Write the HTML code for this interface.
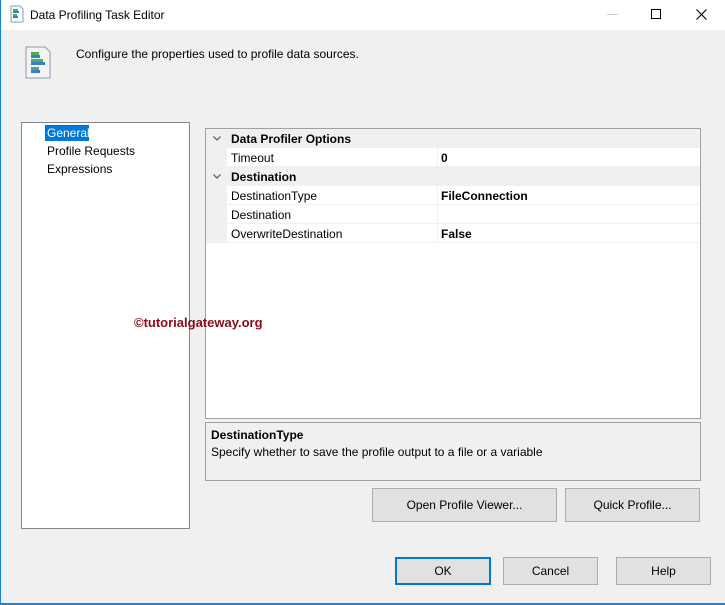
<!DOCTYPE html>
<html><head><style>
*{box-sizing:border-box;margin:0;padding:0}
body{width:725px;height:605px;background:#f0f0f0;font-family:"Liberation Sans",sans-serif;font-size:12px;color:#000;position:relative;overflow:hidden}
.abs{position:absolute}
.btn{position:absolute;background:#e1e1e1;border:1px solid #adadad;text-align:center;font-size:12px}
.row{position:absolute;left:0;width:494px;height:19px;line-height:20px}
.cat{background:#f0f0f0;font-weight:bold}
.cell{position:absolute;top:0;height:18px;background:#fff}
.chev{position:absolute;left:7px;top:7px}
</style></head><body>
<div class="abs" style="left:0;top:0;width:725px;height:30px;background:#fff"></div>
<div class="abs" style="left:0;top:0;width:1px;height:605px;background:#1883d7"></div>
<div class="abs" style="left:0;top:603px;width:725px;height:2px;background:#1883d7"></div>
<svg class="abs" style="left:10px;top:5px" width="14" height="18"><path d="M1 1h9l3 3v13H1z" fill="#fff" stroke="#8a9ab0"/><rect x="3" y="4" width="5" height="2" fill="#4caf50"/><rect x="3" y="6" width="6" height="2" fill="#3a7bd5"/><rect x="3" y="9" width="4" height="2" fill="#4caf50"/><rect x="3" y="11" width="5" height="2" fill="#3a7bd5"/></svg>
<div class="abs" style="left:30px;top:8px;font-size:12px">Data Profiling Task Editor</div>
<div class="abs" style="left:607px;top:14px;width:11px;height:1px;background:#ccc"></div>
<div class="abs" style="left:651px;top:9px;width:10px;height:10px;border:1px solid #000"></div>
<svg class="abs" style="left:696px;top:9px" width="11" height="11"><path d="M0.5 0.5L10.5 10.5M10.5 0.5L0.5 10.5" stroke="#000" stroke-width="1.1"/></svg>
<svg class="abs" style="left:25px;top:46px" width="26" height="33"><path d="M1 1h19l5 5v26H1z" fill="#f4f4f4" stroke="#8a9ab0"/><rect x="6" y="6" width="8" height="3" fill="#4caf50"/><rect x="6" y="9" width="9" height="3" fill="#3a7bd5"/><rect x="6" y="13" width="12" height="3" fill="#4caf50"/><rect x="6" y="16" width="14" height="3" fill="#3a7bd5"/><rect x="6" y="21" width="8" height="3" fill="#4caf50"/><rect x="6" y="24" width="9" height="3" fill="#3a7bd5"/></svg>
<div class="abs" style="left:76px;top:47px">Configure the properties used to profile data sources.</div>
<div class="abs" style="left:21px;top:122px;width:169px;height:407px;background:#fff;border:1px solid #828790"></div>
<div class="abs" style="left:45px;top:125px;width:44px;height:16px;background:#0078d7;color:#fff;padding-left:2px;line-height:16px">General</div>
<div class="abs" style="left:47px;top:144px">Profile Requests</div>
<div class="abs" style="left:47px;top:162px">Expressions</div>
<div class="abs" style="left:205px;top:128px;width:496px;height:291px;background:#fff;border:1px solid #a0a0a0">
 <div class="row cat" style="top:0"><span class="abs" style="left:25px">Data Profiler Options</span></div>
 <div class="row" style="top:19px;background:#f0f0f0"><div class="cell" style="left:21px;width:210px;padding-left:4px">Timeout</div><div class="cell" style="left:232px;width:262px;padding-left:3px;font-weight:bold">0</div></div>
 <div class="row cat" style="top:38px"><span class="abs" style="left:25px">Destination</span></div>
 <div class="row" style="top:57px;background:#f0f0f0"><div class="cell" style="left:21px;width:210px;padding-left:4px">DestinationType</div><div class="cell" style="left:232px;width:262px;padding-left:3px;font-weight:bold">FileConnection</div></div>
 <div class="row" style="top:76px;background:#f0f0f0"><div class="cell" style="left:21px;width:210px;padding-left:4px">Destination</div><div class="cell" style="left:232px;width:262px"></div></div>
 <div class="row" style="top:95px;background:#f0f0f0"><div class="cell" style="left:21px;width:210px;padding-left:4px">OverwriteDestination</div><div class="cell" style="left:232px;width:262px;padding-left:3px;font-weight:bold">False</div></div>
 <div class="abs" style="left:0;top:0;width:21px;height:114px;background:#f0f0f0"></div>
 <svg class="chev" width="8" height="5"><path d="M0.5 0.5L4 4L7.5 0.5" fill="none" stroke="#555" stroke-width="1.2"/></svg>
 <svg class="chev" style="top:45px" width="8" height="5"><path d="M0.5 0.5L4 4L7.5 0.5" fill="none" stroke="#555" stroke-width="1.2"/></svg>
</div>
<div class="abs" style="left:134px;top:315px;color:#8b0a1a;font-weight:bold;font-size:13px">©tutorialgateway.org</div>
<div class="abs" style="left:205px;top:422px;width:496px;height:59px;border:1px solid #a0a0a0;padding:5px 5px">
 <div style="font-weight:bold">DestinationType</div><div style="margin-top:3px">Specify whether to save the profile output to a file or a variable</div>
</div>
<div class="btn" style="left:372px;top:488px;width:185px;height:34px;line-height:32px">Open Profile Viewer...</div>
<div class="btn" style="left:565px;top:488px;width:135px;height:34px;line-height:32px">Quick Profile...</div>
<div class="btn" style="left:395px;top:557px;width:96px;height:28px;line-height:24px;border:2px solid #0078d7">OK</div>
<div class="btn" style="left:503px;top:557px;width:95px;height:28px;line-height:26px">Cancel</div>
<div class="btn" style="left:616px;top:557px;width:95px;height:28px;line-height:26px">Help</div>
</body></html>
